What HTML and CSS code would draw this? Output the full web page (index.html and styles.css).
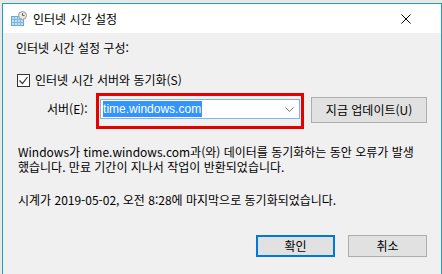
FILE: index.html
```html
<!DOCTYPE html>
<html lang="ko">
<head>
    <meta charset="UTF-8">
    <title>인터넷 시간 설정</title>
    <link rel="stylesheet" href="styles.css">
</head>
<body>
    <div class="window">
        <div class="titlebar">
            <svg class="app-icon" width="16" height="16" viewBox="0 0 16 16">
                <rect x="0.5" y="5.5" width="12" height="9" fill="#bfe0f5" stroke="#6aa9d6"/>
                <path d="M0.5 8.5h12M0.5 11.5h12M3.5 5.5v9M6.5 5.5v9M9.5 5.5v9" stroke="#7fb6dd" stroke-width="1"/>
                <circle cx="11.5" cy="4.5" r="4" fill="#e6e6e6" stroke="#9a9a9a"/>
                <path d="M11.5 2v2.5h2" stroke="#666" stroke-width="1" fill="none"/>
            </svg>
            <span class="title">인터넷 시간 설정</span>
            <svg class="close" width="10" height="10" viewBox="0 0 10 10">
                <path d="M0.5 0.5l9 9M9.5 0.5l-9 9" stroke="#000" stroke-width="1"/>
            </svg>
        </div>
        <div class="content">
            <div class="heading">인터넷 시간 설정 구성:</div>
            <label class="check-row">
                <span class="checkbox">
                    <svg width="11" height="11" viewBox="0 0 11 11">
                        <path d="M1.5 5.5l3 3 5-6.5" stroke="#333" stroke-width="1.2" fill="none"/>
                    </svg>
                </span>
                인터넷 시간 서버와 동기화(S)
            </label>
            <div class="server-row">
                <span class="server-label">서버(E):</span>
                <div class="highlight-box">
                    <div class="combo">
                        <span class="combo-text">time.windows.com</span>
                        <svg class="chevron" width="9" height="5" viewBox="0 0 9 5">
                            <path d="M0.5 0.5l4 4 4-4" stroke="#707070" stroke-width="1" fill="none"/>
                        </svg>
                    </div>
                </div>
                <button class="btn btn-update">지금 업데이트(U)</button>
            </div>
            <p class="message">Windows가 time.windows.com과(와) 데이터를 동기화하는 동안 오류가 발생<br>했습니다. 만료 기간이 지나서 작업이 반환되었습니다.</p>
            <p class="message last-sync">시계가 2019-05-02, 오전 8:28에 마지막으로 동기화되었습니다.</p>
            <div class="actions">
                <button class="btn btn-default">확인</button>
                <button class="btn">취소</button>
            </div>
        </div>
    </div>
</body>
</html>
```

FILE: styles.css
```css
html, body {
    height: 100%;
}

body {
    margin: 0;
    background: #e8e8e8;
    font-family: 'Noto Sans CJK KR', 'Noto Sans', sans-serif;
    font-size: 12px;
    color: #000;
    overflow: hidden;
}

.window {
    margin: 3px 0 0 2px;
    height: 100%;
    border: 1px solid #1ba1c7;
    border-bottom: none;
    background: #f0f0f0;
    display: flex;
    flex-direction: column;
}

.titlebar {
    height: 29px;
    background: #fff;
    display: flex;
    align-items: center;
    padding-left: 8px;
    flex-shrink: 0;
}

.app-icon {
    margin-top: 1px;
}

.title {
    margin-left: 6px;
    font-size: 12px;
    line-height: 14px;
}

.close {
    margin-left: auto;
    margin-right: 30px;
}

.content {
    padding: 0 14px 0 13px;
    display: flex;
    flex-direction: column;
}

.heading {
    margin-top: 8px;
    line-height: 14px;
}

.check-row {
    margin-top: 18px;
    display: flex;
    align-items: center;
    line-height: 14px;
    margin-left: 1px;
}

.checkbox {
    width: 11px;
    height: 11px;
    border: 1px solid #333;
    background: #fff;
    margin-right: 5px;
    display: flex;
}

.server-row {
    margin-top: 6px;
    display: flex;
    align-items: flex-start;
}

.server-label {
    margin: 9px 0 0 31px;
    line-height: 14px;
    width: 50px;
}

.highlight-box {
    border: 3px solid #e60000;
    padding: 3px 1px 7px 1px;
}

.combo {
    width: 196px;
    height: 18px;
    border: 1px solid #7eb4ea;
    background: #fff;
    display: flex;
    align-items: center;
    padding-left: 2px;
    box-sizing: content-box;
}

.combo-text {
    font-family: 'Liberation Sans', Arial, sans-serif;
    font-size: 12px;
    background: #3394ff;
    color: #fff;
    line-height: 16px;
    padding-right: 1px;
}

.chevron {
    margin-left: auto;
    margin-right: 5px;
}

.btn {
    font-family: inherit;
    font-size: 12px;
    color: #000;
    background: #e1e1e1;
    border: 1px solid #adadad;
    padding: 0;
    width: 79px;
    height: 22px;
    line-height: 18px;
}

.btn-update {
    width: 118px;
    height: 26px;
    margin: 4px 0 0 7px;
}

.btn-default {
    border: 2px solid #0078d7;
}

.message {
    margin: 15px 0 0 2px;
    line-height: 15px;
}

.last-sync {
    margin-top: 18px;
}

.actions {
    margin-top: 28px;
    display: flex;
    justify-content: flex-end;
    gap: 13px;
}
```
